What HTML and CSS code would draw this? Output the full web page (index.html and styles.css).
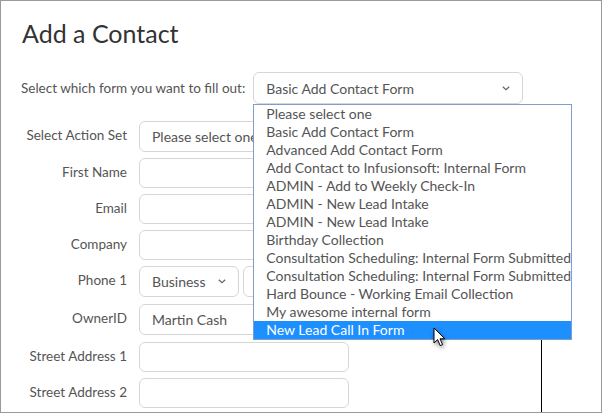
FILE: index.html
```html
<!DOCTYPE html>
<html lang="en">
<head>
  <meta charset="UTF-8" />
  <meta name="viewport" content="width=device-width, initial-scale=1.0" />
  <title>Add a Contact</title>
  <link rel="stylesheet" href="styles.css">
</head>
<body>
  <div class="frame">
    <h1>Add a Contact</h1>

    <div class="form-pick">
      <span class="pick-label">Select which form you want to fill out:</span>
      <div class="picker">
        <div class="select picker-select">
          <span>Basic Add Contact Form</span>
          <svg class="chev" viewBox="0 0 8 5"><path d="M0.8 0.8 L4 3.8 L7.2 0.8" /></svg>
        </div>
        <ul class="options">
          <li>Please select one</li>
          <li>Basic Add Contact Form</li>
          <li>Advanced Add Contact Form</li>
          <li>Add Contact to Infusionsoft: Internal Form</li>
          <li>ADMIN - Add to Weekly Check-In</li>
          <li>ADMIN - New Lead Intake</li>
          <li>ADMIN - New Lead Intake</li>
          <li>Birthday Collection</li>
          <li>Consultation Scheduling: Internal Form Submitted</li>
          <li>Consultation Scheduling: Internal Form Submitted</li>
          <li>Hard Bounce - Working Email Collection</li>
          <li>My awesome internal form</li>
          <li class="active">New Lead Call In Form</li>
        </ul>
      </div>
    </div>

    <div class="fields">
      <div class="row">
        <label>Select Action Set</label>
        <div class="select field tall"><span>Please select one</span></div>
      </div>
      <div class="row">
        <label>First Name</label>
        <div class="field"></div>
      </div>
      <div class="row">
        <label>Email</label>
        <div class="field"></div>
      </div>
      <div class="row">
        <label>Company</label>
        <div class="field"></div>
      </div>
      <div class="row phone">
        <label>Phone 1</label>
        <div class="phone-group">
          <div class="select phone-type tall">
            <span>Business</span>
            <svg class="chev" viewBox="0 0 8 5"><path d="M0.8 0.8 L4 3.8 L7.2 0.8" /></svg>
          </div>
          <div class="field phone-num tall"></div>
        </div>
      </div>
      <div class="row owner">
        <label>OwnerID</label>
        <div class="select field tall"><span>Martin Cash</span></div>
      </div>
      <div class="row">
        <label>Street Address 1</label>
        <div class="field"></div>
      </div>
      <div class="row">
        <label>Street Address 2</label>
        <div class="field"></div>
      </div>
    </div>

    <div class="guide-line"></div>

    <svg class="pointer" viewBox="0 0 14 21" width="14" height="21">
      <path d="M1 1 L1 16 L4.6 12.6 L7.2 18.6 L9.6 17.6 L7 11.8 L11.8 11.8 Z" />
    </svg>
  </div>
</body>
</html>
```

FILE: styles.css
```css
*, *::before, *::after {
  box-sizing: border-box;
  margin: 0;
  padding: 0;
}

body {
  font-family: Lato, "Liberation Sans", Arial, sans-serif;
  background-color: #fff;
  color: #555;
  font-size: 13.5px;
}

.frame {
  position: relative;
  width: 602px;
  height: 413px;
  border: 1px solid #9a9a9a;
  padding: 18px 20px 0;
  overflow: hidden;
}

h1 {
  font-size: 25px;
  font-weight: 400;
  line-height: 29px;
  color: #333;
  padding-left: 1px;
  margin-bottom: 24px;
}

.form-pick {
  display: flex;
  align-items: center;
  gap: 8px;
  margin-bottom: 17px;
}

.picker {
  position: relative;
}

.select,
.field {
  display: flex;
  align-items: center;
  justify-content: space-between;
  height: 30px;
  border: 1px solid #d6d6d6;
  border-radius: 6px;
  padding: 0 12px;
  background-color: #fff;
  color: #555;
  font-size: 14px;
}

.tall {
  height: 31px;
}

.picker-select {
  width: 270px;
  height: 32px;
}

.chev {
  width: 8px;
  height: 5px;
  fill: none;
  stroke: #666;
  stroke-width: 1.2;
}

.options {
  position: absolute;
  top: 100%;
  left: 0;
  width: 319px;
  list-style: none;
  background-color: #fff;
  border: 1px solid #7f9dd0;
  font-size: 14px;
  z-index: 2;
}

.options li {
  height: 18px;
  line-height: 18px;
  padding-left: 12px;
  white-space: nowrap;
}

.options li.active {
  background-color: #1e8fff;
  color: #fff;
}

.fields {
  display: flex;
  flex-direction: column;
  gap: 6px;
}

.row {
  display: grid;
  grid-template-columns: 106px 210px;
  column-gap: 12px;
  align-items: center;
}

.row label {
  text-align: right;
  white-space: nowrap;
  padding-bottom: 3px;
}

.row.owner {
  margin-top: 1px;
}

.row.owner + .row {
  margin-top: 1px;
}

.phone-group {
  display: flex;
  gap: 4px;
}

.phone-type {
  width: 100px;
  flex: none;
}

.phone-num {
  width: 120px;
  flex: none;
}

.guide-line {
  position: absolute;
  left: 540px;
  top: 339px;
  width: 1px;
  height: 80px;
  background-color: #000;
}

.pointer {
  position: absolute;
  left: 432px;
  top: 326px;
  z-index: 3;
  filter: drop-shadow(1px 2px 2px rgba(0, 0, 0, 0.45));
}

.pointer path {
  fill: #fff;
  stroke: #000;
  stroke-width: 1;
  stroke-linejoin: round;
}
```
